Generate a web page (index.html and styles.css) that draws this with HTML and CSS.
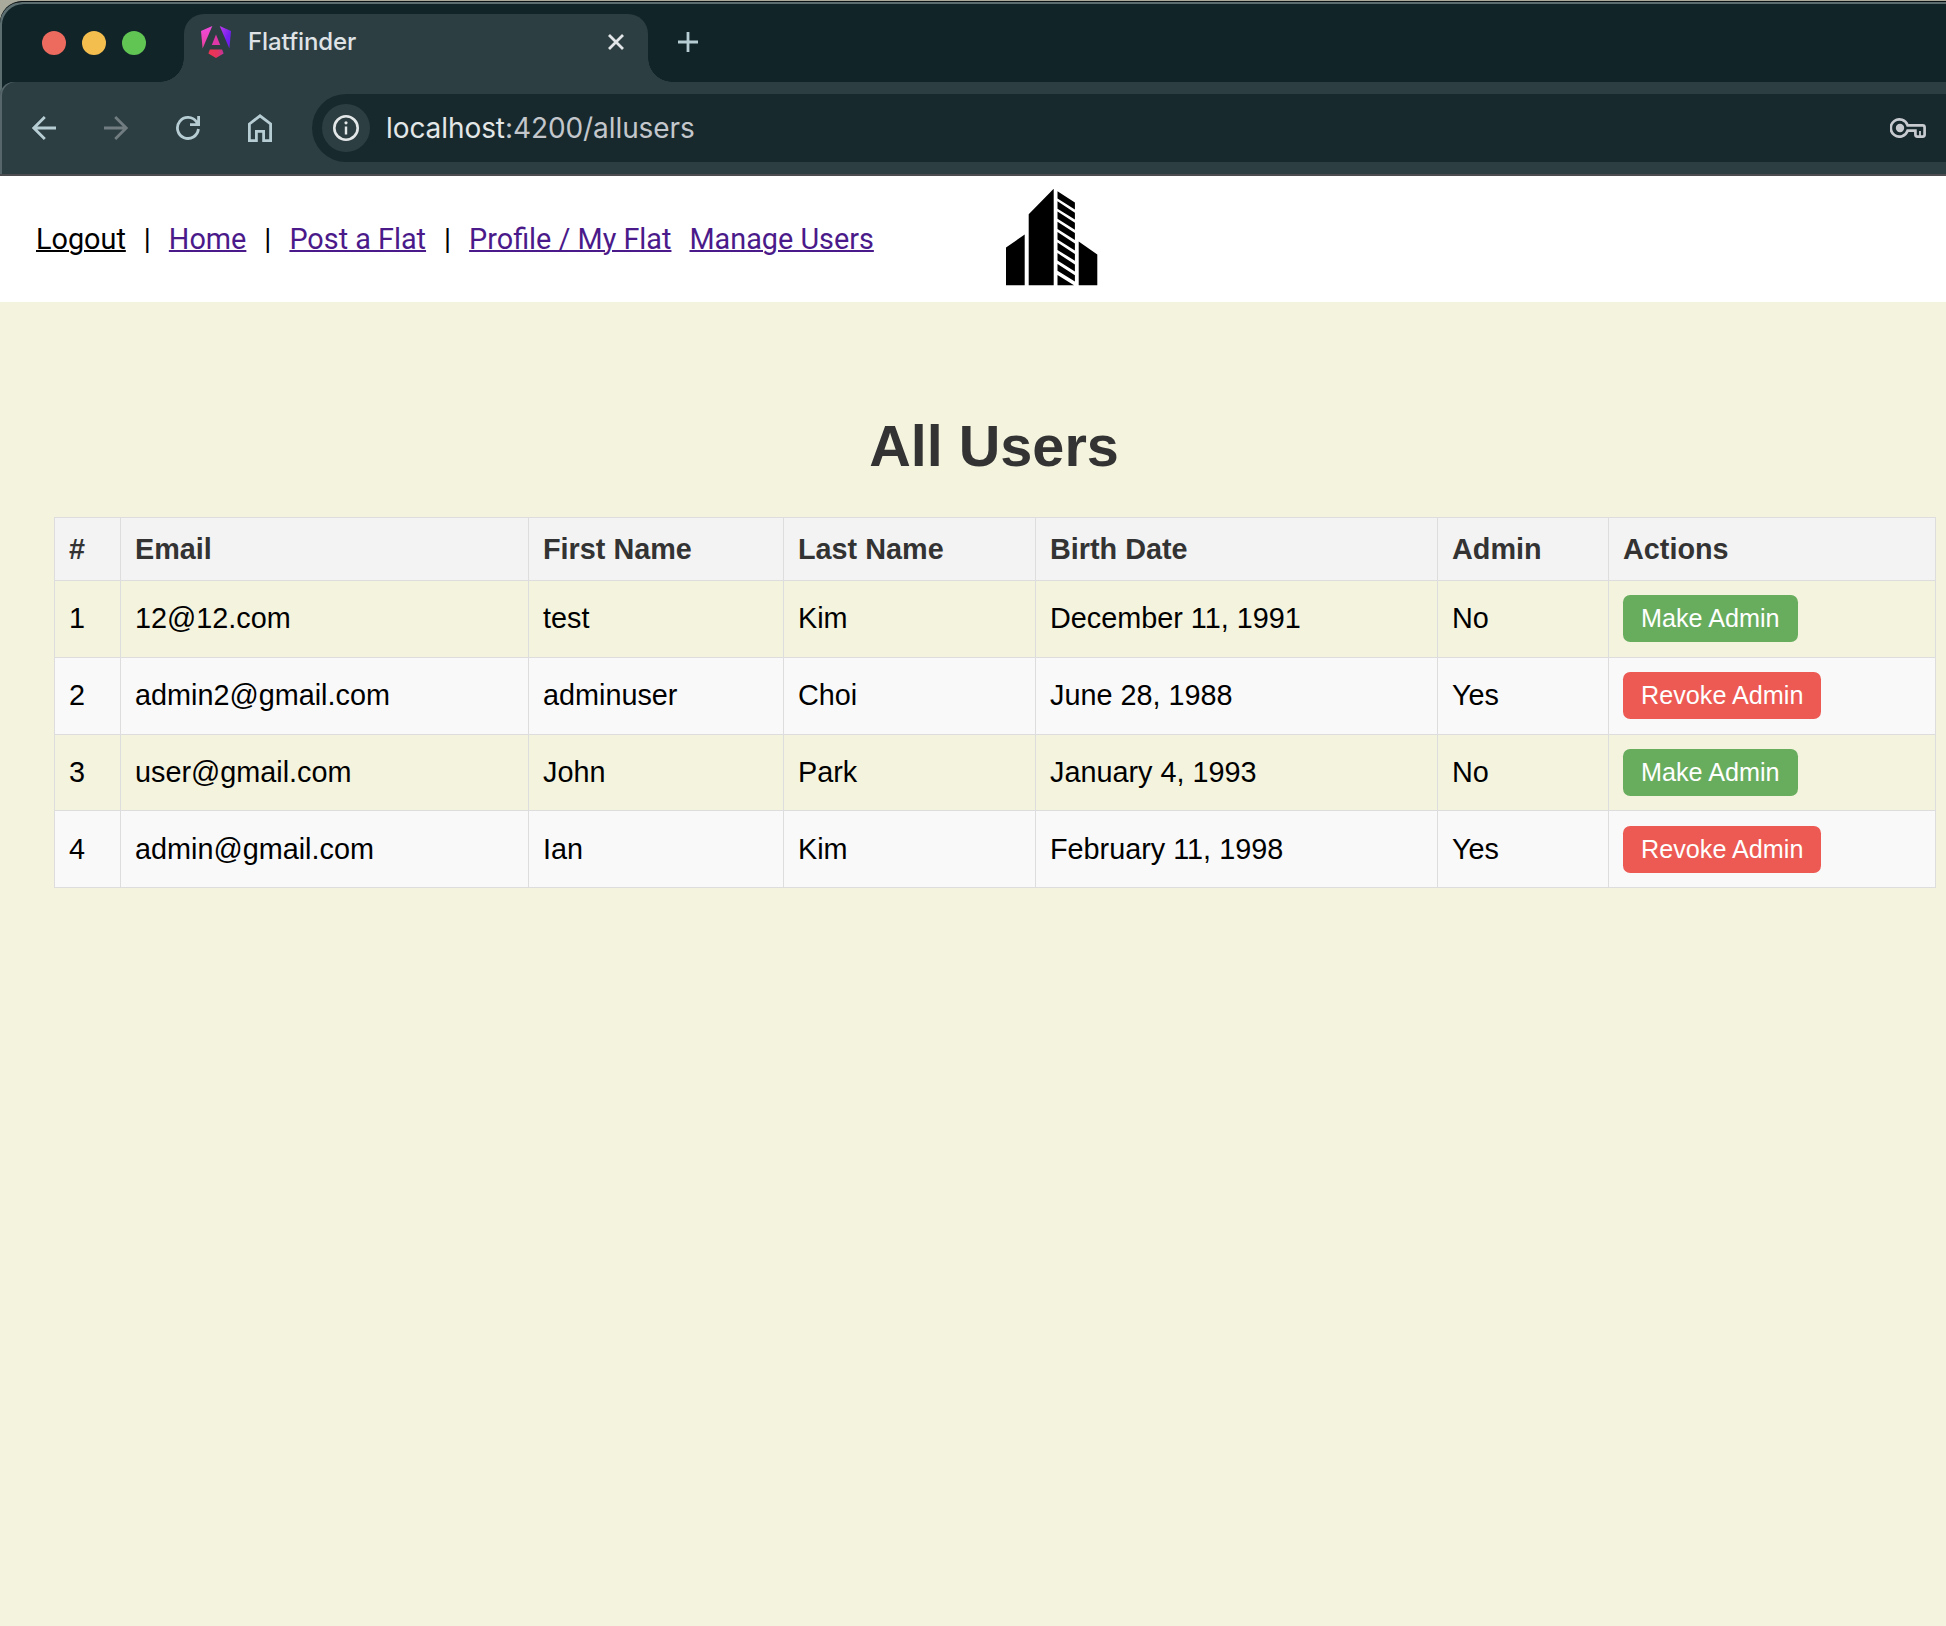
FILE: index.html
```html
<!DOCTYPE html>
<html lang="en">
<head>
<meta charset="utf-8">
<title>Flatfinder</title>
<link rel="stylesheet" href="styles.css">
</head>
<body>
<div class="desktop">
<div class="window">
  <div class="tabstrip">
    <div class="lights"><i class="light close"></i><i class="light minimize"></i><i class="light zoom"></i></div>
    <div class="tab">
      <svg class="favicon" width="30" height="32" viewBox="0 0 30 32">
        <defs>
          <linearGradient id="ga" x1="0" y1="0" x2="0" y2="1"><stop offset="0" stop-color="#f04be0"/><stop offset="1" stop-color="#ea3f9a"/></linearGradient>
          <linearGradient id="gb" x1="0" y1="0" x2="1" y2="1"><stop offset="0" stop-color="#c03bea"/><stop offset=".6" stop-color="#7420f0"/><stop offset="1" stop-color="#6a1cf0"/></linearGradient>
          <linearGradient id="gc" x1="0" y1="0" x2="1" y2="0"><stop offset="0" stop-color="#ee3350"/><stop offset=".6" stop-color="#e33560"/><stop offset="1" stop-color="#c032a0"/></linearGradient>
        </defs>
        <path fill="url(#ga)" d="M0 5 11.3 0 1.6 22.5z"/>
        <path fill="url(#gb)" d="M30 5 18.7 0 28.4 22.5z"/>
        <path fill="#de37a8" d="M15 8.6 19.2 19H10.8z"/>
        <path fill="url(#gc)" d="M8.9 23.6H21.1L22.6 27.6 15 32 7.4 27.6z"/>
      </svg>
      <span class="tab-title">Flatfinder</span>
      <svg class="tab-close" width="16" height="16" viewBox="0 0 16 16"><path d="M1 1 15 15M15 1 1 15" stroke="#e2e6e8" stroke-width="2.8"/></svg>
    </div>
    <svg class="new-tab" width="20" height="20" viewBox="0 0 20 20"><path d="M10 0V20M0 10H20" stroke="#b7cdd4" stroke-width="2.8"/></svg>
  </div>
  <div class="toolbar">
    <svg class="tool" width="24" height="24" viewBox="0 0 24 24" fill="none" stroke="#b7cdd4" stroke-width="2.8"><path d="M24 12H2M12.8 1 1.8 12 12.8 23"/></svg>
    <svg class="tool" width="24" height="24" viewBox="0 0 24 24" fill="none" stroke="#707c80" stroke-width="2.8"><path d="M0 12H22M11.2 1 22.2 12 11.2 23"/></svg>
    <svg class="tool" width="24" height="24" viewBox="0 0 24 24" fill="none" stroke="#b7cdd4" stroke-width="2.8"><path d="M22.4 13A10.5 10.5 0 1 1 20.6 6L22 8.4M22.6 0V8.6H14"/></svg>
    <svg class="tool" width="24" height="28" viewBox="0 0 24 28" fill="none" stroke="#b7cdd4" stroke-width="2.8"><path d="M1.4 10 12 1.8 22.6 10V26.6H15.6V17.4H8.4V26.6H1.4z"/></svg>
    <div class="omnibox">
      <span class="site-info"><svg width="26" height="26" viewBox="0 0 26 26"><circle cx="13" cy="13" r="11.7" fill="none" stroke="#e3e7e8" stroke-width="2.6"/><path d="M13 11.4V19.4" stroke="#e3e7e8" stroke-width="2.4"/><circle cx="13" cy="7.8" r="1.6" fill="#e3e7e8"/></svg></span>
      <span class="url">localhost<span class="url-rest">:4200/allusers</span></span>
      <svg class="key" width="36" height="20" viewBox="0 0 36 20" fill="none" stroke="#c7cbd0" stroke-width="2.7"><path d="M17.6 7.4A8.6 8.6 0 1 0 17.6 12.6H25.4V16.6Q25.4 18.6 27.4 18.6H32.6Q34.6 18.6 34.6 16.6V9.4Q34.6 7.4 32.6 7.4z"/><circle cx="10" cy="10" r="4.2" fill="#c7cbd0" stroke="none"/><path d="M30 13V18" stroke-width="1.8"/></svg>
    </div>
  </div>
</div>
</div>
<header class="site-header">
  <nav class="nav">
    <a class="link logout">Logout</a><span>|</span><a class="link">Home</a><span>|</span><a class="link">Post a Flat</a><span>|</span><a class="link">Profile / My Flat</a><a class="link">Manage Users</a>
  </nav>
  <svg class="logo" width="126" height="126" viewBox="986 176 126 126">
    <path d="M1006 247.6 1024.7 234.5V285.2H1006zM1028.7 214.2 1053.7 188.8V285.2H1028.7zM1078.7 241.5 1097.3 254.4V285.2H1078.7z"/>
    <path d="M1057.5 191.2 1074.9 202.6V209.5L1057.5 198.6zM1057.5 201.3 1074.9 212.7V219.6L1057.5 208.7zM1057.5 211.4 1074.9 222.8V229.7L1057.5 218.8zM1057.5 221.7 1074.9 233.1V240L1057.5 229.1zM1057.5 232.1 1074.9 243.5V250.4L1057.5 239.5zM1057.5 242.5 1074.9 253.9V260.8L1057.5 249.9zM1057.5 253.1 1074.9 264.5V271.4L1057.5 260.5zM1057.5 263.9 1074.9 275.3V281.6L1057.5 270.7zM1057.5 274.9 1074 285.2H1057.5z"/>
  </svg>
</header>
<main class="content">
  <h1 class="title">All Users</h1>
  <table class="users">
    <colgroup><col class="c-num"><col class="c-email"><col class="c-first"><col class="c-last"><col class="c-birth"><col class="c-admin"><col class="c-actions"></colgroup>
    <thead><tr><th>#</th><th>Email</th><th>First Name</th><th>Last Name</th><th>Birth Date</th><th>Admin</th><th>Actions</th></tr></thead>
    <tbody>
      <tr><td>1</td><td>12@12.com</td><td>test</td><td>Kim</td><td>December 11, 1991</td><td>No</td><td><button class="btn make">Make Admin</button></td></tr>
      <tr><td>2</td><td>admin2@gmail.com</td><td>adminuser</td><td>Choi</td><td>June 28, 1988</td><td>Yes</td><td><button class="btn revoke">Revoke Admin</button></td></tr>
      <tr class="short"><td>3</td><td>user@gmail.com</td><td>John</td><td>Park</td><td>January 4, 1993</td><td>No</td><td><button class="btn make">Make Admin</button></td></tr>
      <tr class="last"><td>4</td><td>admin@gmail.com</td><td>Ian</td><td>Kim</td><td>February 11, 1998</td><td>Yes</td><td><button class="btn revoke">Revoke Admin</button></td></tr>
    </tbody>
  </table>
</main>
</body>
</html>
```
FILE: styles.css
```css
* { box-sizing: border-box; }
body {
  margin: 0;
  min-height: 1626px;
  background: #f4f3de;
  color: #000;
  font-family: "Liberation Sans", Arial, sans-serif;
  overflow: hidden;
}
svg { display: block; flex: none; }

/* Browser window */
.desktop { height: 176px; padding-top: 1px; background: #a9aa9c; }
.window {
  height: 175px;
  border-top: 1px solid #0b1012;
  border-radius: 22px 0 0 0;
  background: #112428;
  box-shadow: inset 2px 2px 0 #5d6e70;
  overflow: hidden;
}
.tabstrip { display: flex; height: 80px; padding: 12px 0 0 42px; }
.lights { display: flex; gap: 16px; width: 142px; padding-top: 17px; }
.light { width: 24px; height: 24px; border-radius: 50%; }
.close { background: #ed6a5e; }
.minimize { background: #f4be4f; }
.zoom { background: #61c554; }
.tab {
  position: relative;
  display: flex;
  width: 464px;
  height: 68px;
  padding: 0 24px 0 17px;
  border-radius: 20px 20px 0 0;
  background: #2d3e42;
}
.tab::before, .tab::after {
  content: "";
  position: absolute;
  bottom: 0;
  width: 24px;
  height: 24px;
}
.tab::before { left: -24px; background: radial-gradient(circle at 0 0, transparent 23.5px, #2d3e42 24px); }
.tab::after { right: -24px; background: radial-gradient(circle at 100% 0, transparent 23.5px, #2d3e42 24px); }
.favicon { margin-top: 12px; }
.tab-title {
  margin-left: 17px;
  font: 500 24px/30px Inter, sans-serif;
  letter-spacing: -.1px;
  padding-top: 13px;
  color: #dfe3e6;
}
.tab-close { margin: 20px 0 0 auto; }
.new-tab { margin: 18px 0 0 30px; }
.toolbar {
  display: flex;
  align-items: center;
  gap: 48px;
  height: 94px;
  padding-left: 32px;
  border-bottom: 2px solid #4b4d50;
  border-radius: 14px 0 0 0;
  background: #2d3e42;
  box-shadow: inset 2px 0 0 #56666a;
}
.omnibox {
  display: flex;
  align-items: center;
  flex: 1;
  height: 68px;
  margin-left: -8px;
  padding: 0 20px 0 10px;
  border-radius: 34px 0 0 34px;
  background: #18292d;
}
.site-info {
  display: grid;
  place-items: center;
  width: 48px;
  height: 48px;
  border-radius: 50%;
  background: #2d3e42;
}
.url {
  margin-left: 16px;
  font: 28px/36px Inter, sans-serif;
  letter-spacing: -.08px;
  color: #e3e7e8;
}
.url-rest { color: #c3c7cc; }
.key { margin-left: auto; }

/* Site header */
.site-header {
  display: flex;
  align-items: center;
  height: 126px;
  padding-left: 36px;
  background: #fff;
}
.nav {
  display: flex;
  gap: 18px;
  width: 950px;
  font: 28.8px/34px Roboto, sans-serif;
  white-space: nowrap;
}
.link {
  color: #4b1a8a;
  text-decoration: underline;
  text-decoration-thickness: 2px;
}
.logout { color: #000; }

/* User list */
.content { padding: 108px 10px 0 54px; }
.title {
  margin: 0;
  width: 1880px;
  height: 107px;
  font-size: 57.6px;
  line-height: 72px;
  text-align: center;
  color: #333;
}
.users {
  width: 1882px;
  table-layout: fixed;
  border: solid #ddd;
  border-width: 1px 0 0 1px;
  border-spacing: 0;
  font-size: 28.8px;
  line-height: 33px;
}
.c-num { width: 66px; }
.c-email { width: 408px; }
.c-first { width: 255px; }
.c-last { width: 252px; }
.c-birth { width: 402px; }
.c-admin { width: 171px; }
.c-actions { width: 327px; }
.users th, .users td {
  height: 77px;
  padding: 0 14px 1px;
  border: solid #ddd;
  border-width: 0 1px 1px 0;
  text-align: left;
  vertical-align: middle;
}
.users th { height: 63px; padding-bottom: 0; background: #f3f3f3; color: #333; }
.users .short td { height: 76px; padding-bottom: 0; }
.users .last td { padding-bottom: 0; }
.users tbody tr:nth-child(even) { background: #f9f9f9; }
.btn {
  display: block;
  height: 47px;
  padding: 0 18px;
  border: 0;
  border-radius: 7.2px;
  font: 25.2px/29px "Liberation Sans", Arial, sans-serif;
  color: #fff;
}
.make { background: #68ad5e; }
.revoke { background: #ec5a53; }
```
